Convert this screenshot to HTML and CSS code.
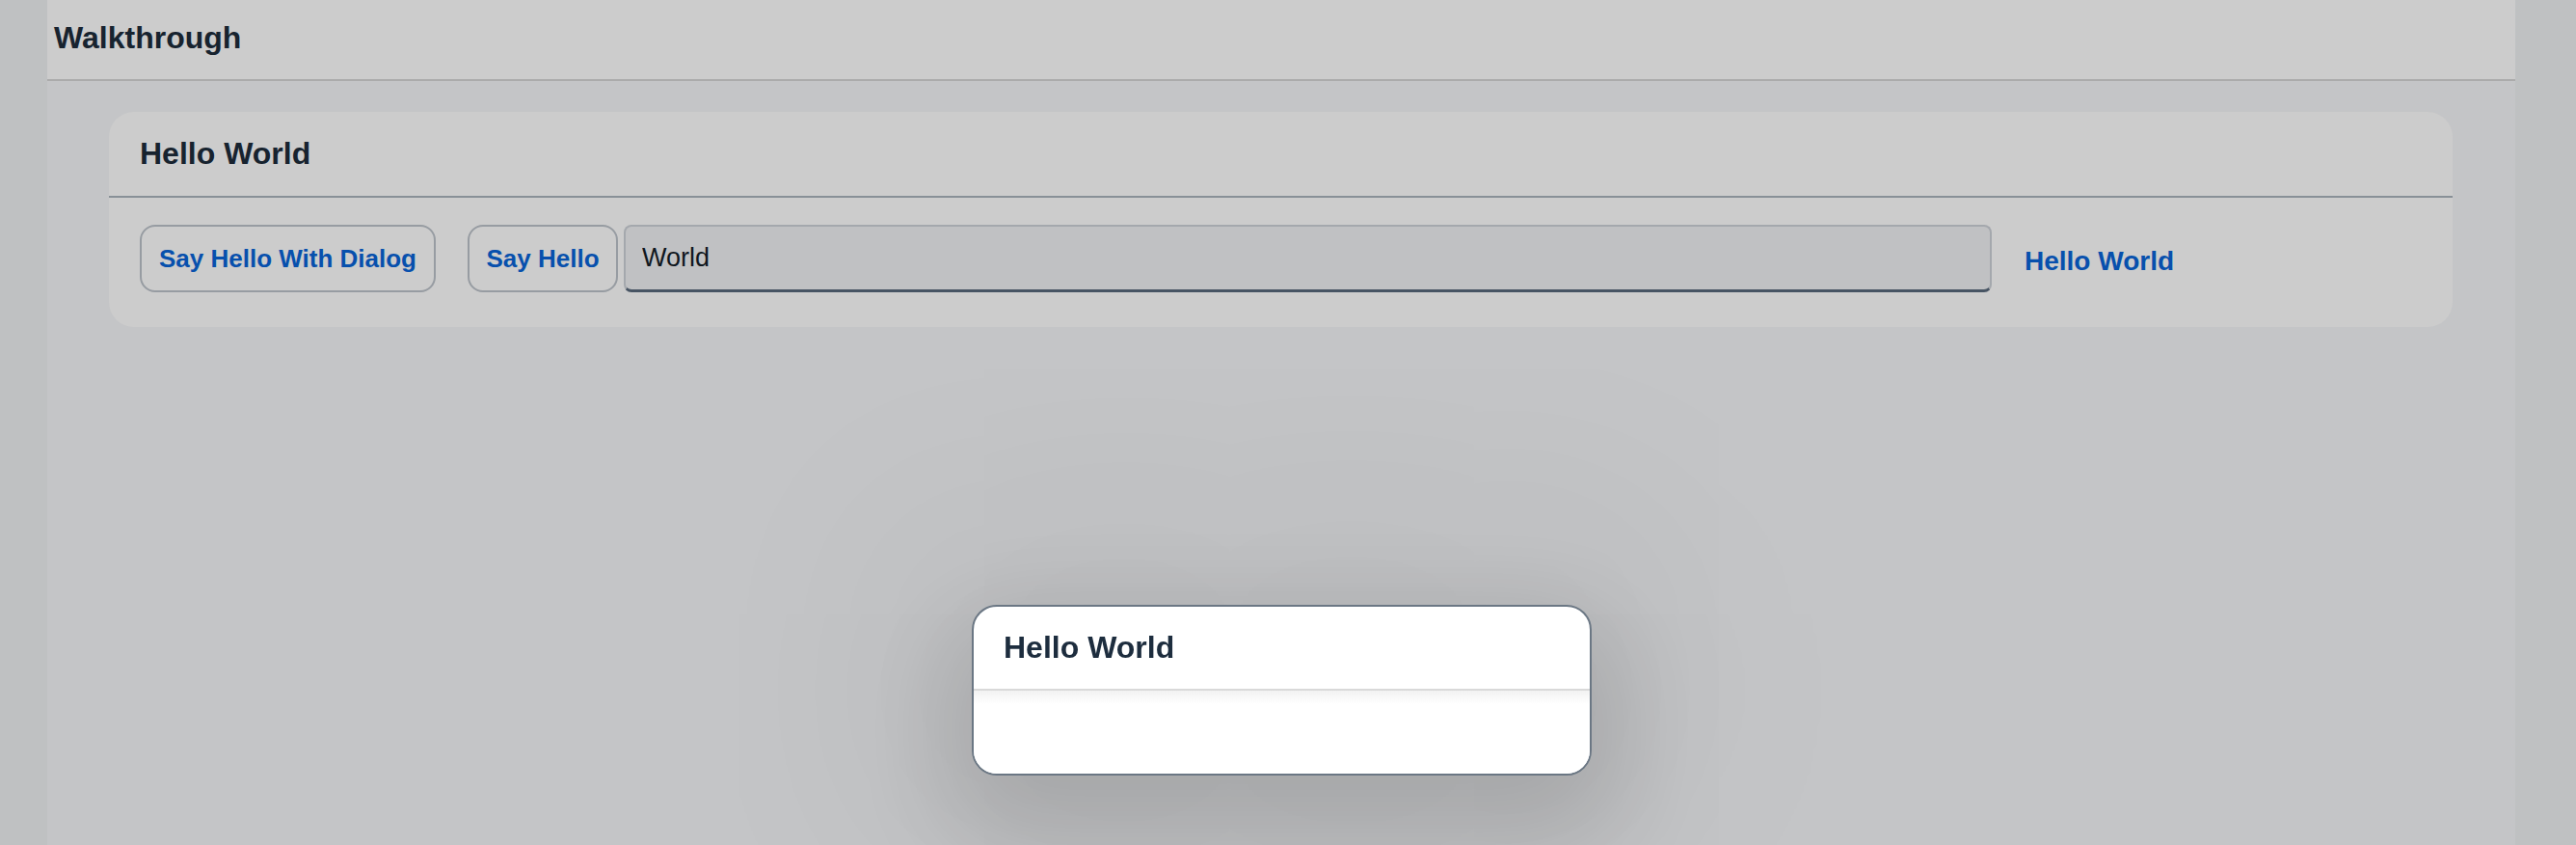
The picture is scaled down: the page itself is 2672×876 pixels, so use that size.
FILE: index.html
```html
<!DOCTYPE html>
<html lang="en">
<head>
<meta charset="utf-8">
<title>Walkthrough</title>
<link rel="stylesheet" href="styles.css">
</head>
<body>
<div class="shell">
  <div class="app">
    <header class="page-header">
      <span class="page-title">Walkthrough</span>
    </header>
    <main class="page-content">
      <section class="panel">
        <div class="panel-header">Hello World</div>
        <div class="panel-content">
          <button class="btn btn-dialog" type="button">Say Hello With Dialog</button>
          <div class="hello-group">
            <button class="btn" type="button">Say Hello</button>
            <input class="input" type="text" value="World">
            <span class="highlight-text">Hello World</span>
          </div>
        </div>
      </section>
    </main>
  </div>
</div>
<div class="block-layer"></div>
<div class="dialog" role="dialog">
  <div class="dialog-header">Hello World</div>
  <div class="dialog-body"></div>
</div>
</body>
</html>
```

FILE: styles.css
```css
html, body {
  margin: 0;
  padding: 0;
  height: 100%;
}

body {
  background: #bfc1c2;
  font-family: "Liberation Sans", Arial, sans-serif;
  overflow: hidden;
}

.shell {
  height: 100%;
  padding-left: 49px;
}

.app {
  width: 2560px;
  height: 100%;
  background: #c4c5c7;
  display: flex;
  flex-direction: column;
}

.page-header {
  height: 82px;
  background: #cccccc;
  border-bottom: 2px solid #ababab;
  display: flex;
  align-items: center;
  padding-left: 7px;
  box-sizing: content-box;
}

.page-title {
  font-size: 32px;
  font-weight: bold;
  color: #17232f;
  margin-top: -4px;
}

.page-content {
  padding: 32px 65px 0 64px;
}

.panel {
  background: #cccccc;
  border-radius: 26px;
  overflow: hidden;
}

.panel-header {
  height: 87px;
  display: flex;
  align-items: center;
  padding-left: 32px;
  font-size: 32px;
  font-weight: bold;
  color: #17232f;
  border-bottom: 2px solid #889097;
}

.panel-content {
  display: flex;
  align-items: center;
  padding: 28px 32px 36px 32px;
}

.btn {
  height: 70px;
  box-sizing: border-box;
  padding: 0;
  border: 2px solid #979ca2;
  border-radius: 16px;
  background: transparent;
  color: #0750ad;
  font-family: "Liberation Sans", Arial, sans-serif;
  font-size: 26px;
  font-weight: bold;
  white-space: nowrap;
  flex: none;
}

.btn-dialog {
  width: 307px;
  margin-right: 33px;
}

.hello-group {
  flex: 1;
  display: flex;
  align-items: center;
}

.hello-group .btn {
  width: 156px;
  margin-right: 6px;
}

.input {
  width: 1419px;
  height: 70px;
  flex: none;
  box-sizing: border-box;
  border: 2px solid #a4a8ad;
  border-bottom: 3px solid #475463;
  border-radius: 8px;
  background: #c0c1c3;
  padding: 0 17px;
  font-family: "Liberation Sans", Arial, sans-serif;
  font-size: 27px;
  color: #10171e;
  outline: none;
}

.highlight-text {
  margin-left: 34px;
  margin-top: 6px;
  font-size: 28px;
  font-weight: bold;
  color: #0750ad;
  white-space: nowrap;
}

.block-layer {
  position: fixed;
  inset: 0;
  background: transparent;
}

.dialog {
  position: fixed;
  left: 1008px;
  top: 627px;
  width: 643px;
  height: 177px;
  box-sizing: border-box;
  background: #ffffff;
  border: 2px solid #6b7784;
  border-radius: 26px;
  overflow: hidden;
  display: flex;
  flex-direction: column;
  box-shadow: 0 40px 110px 30px rgba(0, 0, 0, 0.13), 0 0 260px 90px rgba(0, 0, 0, 0.05);
}

.dialog-header {
  height: 85px;
  flex: none;
  display: flex;
  align-items: center;
  padding-left: 31px;
  font-size: 32px;
  font-weight: bold;
  color: #1d2d3e;
  border-bottom: 2px solid #d9d9d9;
}

.dialog-body {
  flex: 1;
  background: linear-gradient(#f2f2f2, #ffffff 14px);
}
```
